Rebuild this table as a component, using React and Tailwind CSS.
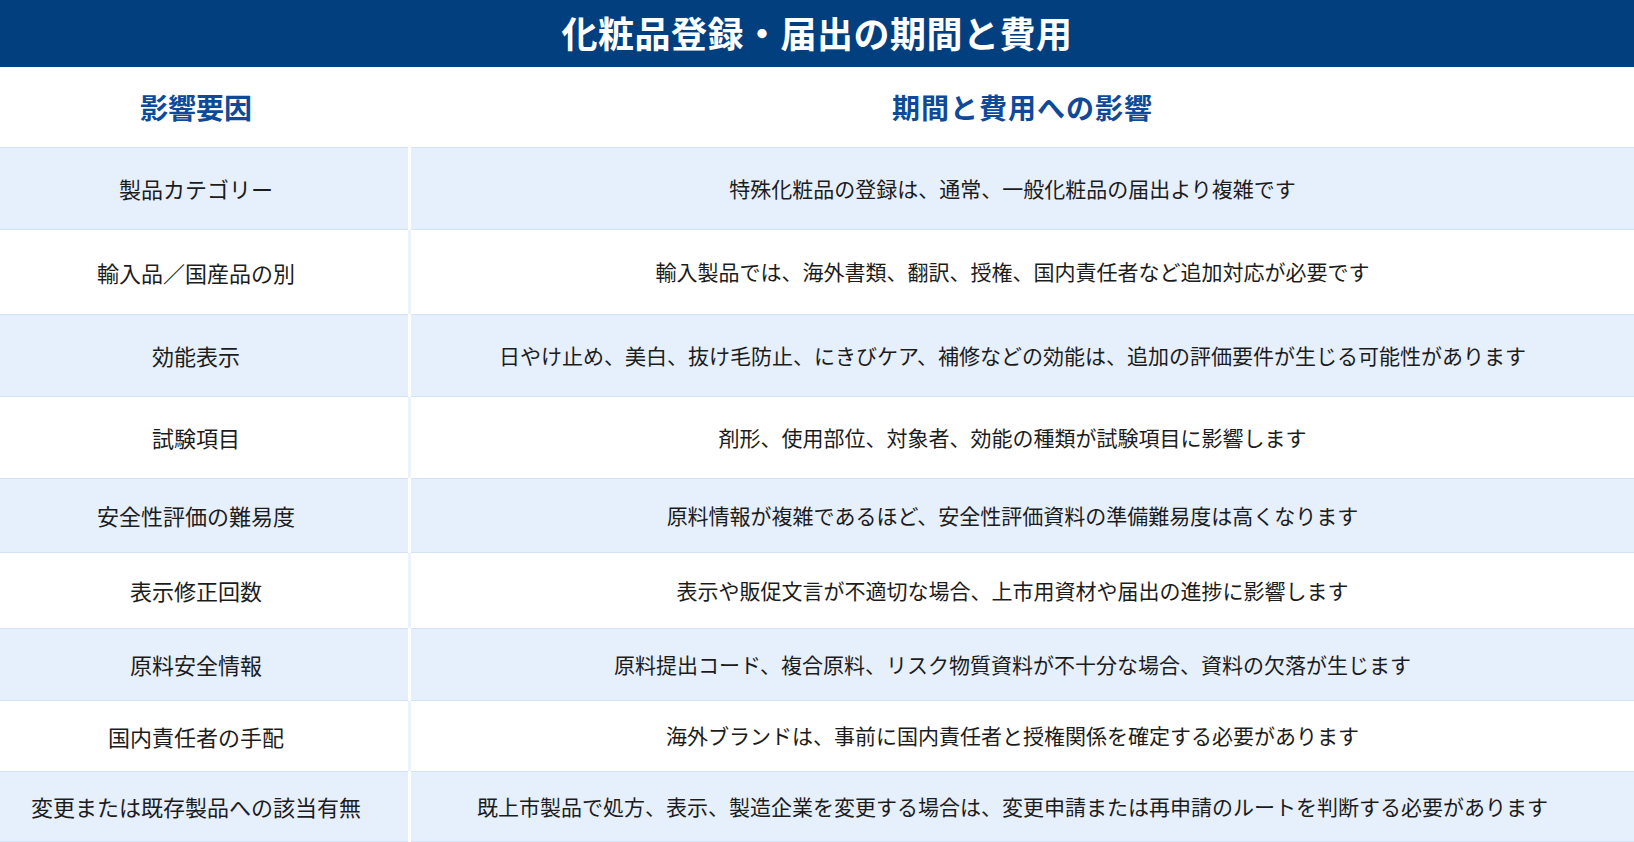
const rows = [
  { factor: "製品カテゴリー", effect: "特殊化粧品の登録は、通常、一般化粧品の届出より複雑です", h: "h-[83px]" },
  { factor: "輸入品／国産品の別", effect: "輸入製品では、海外書類、翻訳、授権、国内責任者など追加対応が必要です", h: "h-[84px]" },
  { factor: "効能表示", effect: "日やけ止め、美白、抜け毛防止、にきびケア、補修などの効能は、追加の評価要件が生じる可能性があります", h: "h-[83px]" },
  { factor: "試験項目", effect: "剤形、使用部位、対象者、効能の種類が試験項目に影響します", h: "h-[81px]" },
  { factor: "安全性評価の難易度", effect: "原料情報が複雑であるほど、安全性評価資料の準備難易度は高くなります", h: "h-[75px]" },
  { factor: "表示修正回数", effect: "表示や販促文言が不適切な場合、上市用資材や届出の進捗に影響します", h: "h-[75px]" },
  { factor: "原料安全情報", effect: "原料提出コード、複合原料、リスク物質資料が不十分な場合、資料の欠落が生じます", h: "h-[73px]" },
  { factor: "国内責任者の手配", effect: "海外ブランドは、事前に国内責任者と授権関係を確定する必要があります", h: "h-[70px]" },
  { factor: "変更または既存製品への該当有無", effect: "既上市製品で処方、表示、製造企業を変更する場合は、変更申請または再申請のルートを判断する必要があります", h: "h-[71px]" },
];

function Row({ row, shaded }) {
  const cell = shaded
    ? "bg-[#e6effc] border-y border-[#d3e2f8]"
    : "bg-white";
  return (
    <div className={`flex ${row.h}`}>
      <div className={`w-[408px] flex items-center justify-center pr-4 text-[22px] ${cell}`}>
        {row.factor}
      </div>
      <div className={shaded ? "w-[3px] bg-white" : "w-[3px] bg-[#edf3fd]"} />
      <div className={`flex-1 flex items-center justify-center pr-5 text-[21px] ${cell}`}>
        {row.effect}
      </div>
    </div>
  );
}

export default function App() {
  return (
    <div
      className="w-[1634px] h-[842px] bg-white text-[#1c1c1c] overflow-hidden"
      style={{ fontFamily: '"Noto Sans CJK JP", "Noto Sans", sans-serif' }}
    >
      <div className="h-[67px] bg-[#023f7f] flex items-center justify-center pb-1">
        <h1 className="text-white text-[36px] font-bold tracking-[0.5px]">
          化粧品登録・届出の期間と費用
        </h1>
      </div>
      <div className="flex h-[80px] text-[#0f4a99] font-bold text-[28px]">
        <div className="w-[408px] flex items-center justify-center pr-4">影響要因</div>
        <div className="w-[3px]" />
        <div className="flex-1 flex items-center justify-center tracking-[1px]">期間と費用への影響</div>
      </div>
      {rows.map((r, i) => (
        <Row key={i} row={r} shaded={i % 2 === 0} />
      ))}
    </div>
  );
}
